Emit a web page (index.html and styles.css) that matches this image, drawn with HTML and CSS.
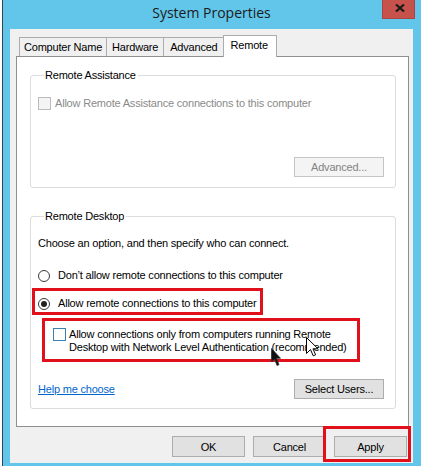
FILE: index.html
```html
<!DOCTYPE html>
<html>
<head>
<meta charset="utf-8">
<link rel="stylesheet" href="styles.css">
</head>
<body>
<div class="window">
  <div class="titlebar">
    <span class="title">System Properties</span>
    <div class="close">
      <svg width="10" height="8" viewBox="0 0 10 8"><path d="M1 0.5 L9 7.5 M9 0.5 L1 7.5" stroke="#1a1a1a" stroke-width="2.2" fill="none"/></svg>
    </div>
  </div>
  <div class="client">
    <div class="tabs">
      <div class="tab t1">Computer Name</div>
      <div class="tab t2">Hardware</div>
      <div class="tab t3">Advanced</div>
      <div class="tab active">Remote</div>
    </div>
    <div class="panel">
      <fieldset class="group g1">
        <legend>Remote Assistance</legend>
        <div class="row disabled"><span class="check dis"></span><span>Allow Remote Assistance connections to this computer</span></div>
        <div class="btnrow ra"><div class="btn dis-btn">Advanced...</div></div>
      </fieldset>
      <fieldset class="group g2">
        <legend>Remote Desktop</legend>
        <div class="intro">Choose an option, and then specify who can connect.</div>
        <div class="row r1"><span class="radio"></span><span>Don’t allow remote connections to this computer</span></div>
        <div class="row r2"><span class="radio on"></span><span>Allow remote connections to this computer</span></div>
        <div class="row nla"><span class="check hover"></span><span class="nla-text">Allow connections only from computers running Remote<br>Desktop with Network Level Authentication (recommended)</span></div>
        <div class="btnrow rd"><a class="link">Help me choose</a><div class="btn">Select Users...</div></div>
      </fieldset>
    </div>
    <div class="buttons">
      <div class="btn big">OK</div>
      <div class="btn big">Cancel</div>
      <div class="btn big">Apply</div>
    </div>
  </div>
  <div class="mark m1"></div>
  <div class="mark m2"></div>
  <div class="mark m3"></div>
  <svg class="cursor c1" width="13" height="20" viewBox="0 0 13 20"><path d="M0.5 0.5 L0.5 16.5 L4.5 12.5 L7.2 18.8 L9.6 17.8 L7 11.8 L12 11.8 Z" fill="#fff" stroke="#000" stroke-width="1"/></svg>
  <svg class="cursor c2" width="10" height="19" viewBox="0 0 10 19"><path d="M0.5 0.5 L0.5 14 L3.5 11 L6 17.5 L8 16.7 L5.6 10.3 L9.5 10.3 Z" fill="#111" stroke="#333" stroke-width="0.8"/></svg>
</div>
</body>
</html>
```

FILE: styles.css
```css
html, body {
  margin: 0;
  padding: 0;
}
body {
  background: #ffffff;
  font-family: "Liberation Sans", Arial, sans-serif;
  font-size: 11px;
  letter-spacing: -0.2px;
  color: #000;
  width: 421px;
  height: 466px;
  overflow: hidden;
}
.window {
  position: relative;
  margin-left: 2px;
  width: 419px;
  height: 466px;
  box-sizing: border-box;
  border-left: 1px solid #2f4552;
  background: #62c6ea;
  padding: 0 8px 3px 7px;
  display: flex;
  flex-direction: column;
}
.titlebar {
  height: 29px;
  flex: none;
  display: flex;
  justify-content: center;
  align-items: flex-start;
}
.title {
  font-family: "Open Sans", "Noto Sans", sans-serif;
  font-size: 14px;
  letter-spacing: 0;
  line-height: 20px;
  padding-top: 3px;
  color: #1b1b1b;
}
.close {
  position: absolute;
  top: 0;
  right: 6px;
  width: 33px;
  height: 19px;
  box-sizing: border-box;
  background: #c7514b;
  border: 1px solid #a9443f;
  border-top: none;
  display: flex;
  align-items: center;
  justify-content: center;
}
.close svg {
  display: block;
  margin-top: -2px;
  margin-left: 2px;
}
.client {
  flex: 1;
  background: #f0f0f0;
  padding: 6px 4px 0 6px;
  display: flex;
  flex-direction: column;
}
.tabs {
  display: flex;
  align-items: flex-end;
  height: 21px;
  padding-left: 3px;
  position: relative;
  z-index: 1;
}
.tab {
  height: 19px;
  box-sizing: border-box;
  border: 1px solid #acacac;
  border-bottom: none;
  background: #f0f0f0;
  line-height: 18px;
  margin-right: -1px;
  white-space: nowrap;
}
.t1 { padding: 0 4px 0 4px; }
.t2 { padding: 0 5px; }
.t3 { padding: 0 5px 0 6px; }
.tab.active {
  height: 22px;
  margin-bottom: -1px;
  background: #ffffff;
  padding: 0 8px 0 7px;
  line-height: 18px;
  position: relative;
}
.panel {
  height: 371px;
  box-sizing: border-box;
  background: #ffffff;
  border: 1px solid #8e8f8f;
  padding: 12px 12px 0 13px;
}
.group {
  margin: 0;
  border: 1px solid #dcdcdc;
  border-radius: 3px;
  padding: 0 11px 9px 7px;
}
.group legend {
  margin-left: 6px;
  padding: 0 2px 0 1px;
  line-height: 13px;
  height: 13px;
}
.g1 { padding-top: 15px; padding-bottom: 10px; }
.g2 { padding-top: 14px; margin-top: 22px; }
.row {
  display: flex;
  align-items: center;
  gap: 4px;
  line-height: 13px;
}
.disabled { color: #8a8a8a; }
.check {
  width: 13px;
  height: 13px;
  box-sizing: border-box;
  flex: none;
  background: #fff;
  border: 1px solid #333;
}
.check.dis {
  border-color: #bcbcbc;
  background: #f4f4f4;
}
.check.hover {
  border-color: #3c7fb1;
}
.radio {
  width: 12px;
  height: 12px;
  box-sizing: border-box;
  flex: none;
  border: 1px solid #3a3a3a;
  border-radius: 50%;
  background: #fff;
  margin-right: 4px;
  position: relative;
}
.radio.on::after {
  content: "";
  position: absolute;
  left: 2px;
  top: 2px;
  width: 6px;
  height: 6px;
  border-radius: 50%;
  background: #222;
}
.btnrow {
  display: flex;
  justify-content: flex-end;
  align-items: center;
}
.btnrow.ra { margin-top: 47px; }
.btnrow.rd { margin-top: 25px; justify-content: space-between; }
.btn {
  width: 90px;
  height: 20px;
  box-sizing: border-box;
  background: #e1e1e1;
  border: 1px solid #adadad;
  display: flex;
  align-items: center;
  justify-content: center;
  white-space: nowrap;
}
.dis-btn {
  background: #f4f4f4;
  border-color: #c4c4c4;
  color: #838383;
}
.intro { line-height: 13px; }
.r1 { margin-top: 19px; }
.r2 { margin-top: 15px; }
.nla {
  margin-top: 18px;
  padding-left: 15px;
  align-items: flex-start;
  gap: 3px;
}
.link {
  color: #0066cc;
  text-decoration: underline;
  line-height: 13px;
}
.buttons {
  display: flex;
  justify-content: flex-end;
  gap: 8px;
  margin-top: 9px;
  padding-right: 2px;
}
.btn.big {
  width: 73px;
  height: 21px;
}
.mark {
  position: absolute;
  border: 3px solid #e0111b;
  box-sizing: border-box;
}
.m1 { left: 29px; top: 288px; width: 231px; height: 27px; }
.m2 { left: 39px; top: 318px; width: 318px; height: 44px; }
.m3 { left: 320px; top: 426px; width: 88px; height: 36px; }
.cursor {
  position: absolute;
  display: block;
}
.c1 { left: 303px; top: 337px; }
.c2 { left: 268px; top: 348px; }
```
